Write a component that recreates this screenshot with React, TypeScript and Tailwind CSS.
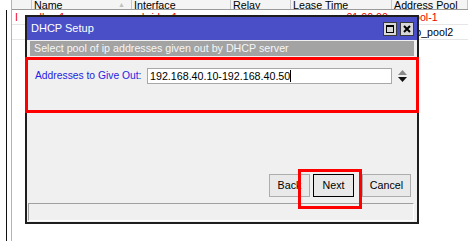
const cols = [
  { w: 20, label: '' },
  { w: 100, label: 'Name' },
  { w: 99, label: 'Interface' },
  { w: 60, label: 'Relay' },
  { w: 101, label: 'Lease Time' },
  { w: 76, label: 'Address Pool' },
];

function TitleButton({ kind }: { kind: 'max' | 'close' }) {
  return (
    <div className="w-[14px] h-[14px] border border-[#3a3a3a] bg-[#d8d8d8] flex items-center justify-center">
      {kind === 'max' ? (
        <div className="w-[8px] h-[8px] border border-black border-t-2" />
      ) : (
        <svg width="8" height="8" viewBox="0 0 8 8">
          <path d="M1 1 L7 7 M7 1 L1 7" stroke="#000" strokeWidth="2" />
        </svg>
      )}
    </div>
  );
}

export default function App() {
  return (
    <div className="relative w-[468px] h-[241px] overflow-hidden bg-white text-[10.7px] text-black font-['Liberation_Sans',Arial,sans-serif]">
      {/* background list window */}
      <div className="flex h-full">
        <div className="w-[6px]" />
        <div className="w-[2px] mt-[10px] bg-[#111]" />
        <div className="w-[4px]" />
        <div className="flex-1 flex flex-col border-l border-[#b4b4b4]">
          <div className="flex h-[10px] border-b border-[#9a9a9a] bg-[#f4f4f4] leading-[10px]">
            {cols.map((c, i) => (
              <div
                key={i}
                style={{ width: c.w }}
                className="relative shrink-0 border-r border-[#c8c8c8] pl-[2px] whitespace-nowrap overflow-hidden"
              >
                {c.label}
                {i === 1 && <span className="absolute right-[6px] top-[0px] text-[7px] text-[#c0c0c0]">▲</span>}
              </div>
            ))}
          </div>
          <div className="flex h-[15px] leading-[15px] border-b border-[#e6e6e6] text-[#f00000] whitespace-nowrap">
            <div className="w-[20px] shrink-0 pl-[3px]">I</div>
            <div className="w-[100px] shrink-0 pl-[4px]">dhcp1</div>
            <div className="w-[99px] shrink-0 pl-[10px]">bridge1</div>
            <div className="w-[60px] shrink-0" />
            <div className="w-[101px] shrink-0 pr-[4px] text-right">01:00:00</div>
            <div className="w-[76px] shrink-0 pl-[16px]">pool-1</div>
          </div>
          <div className="flex h-[15px] leading-[15px] border-b border-[#e6e6e6] whitespace-nowrap">
            <div className="w-[20px] shrink-0" />
            <div className="w-[100px] shrink-0 pl-[4px]">dhcp2</div>
            <div className="w-[99px] shrink-0" />
            <div className="w-[60px] shrink-0" />
            <div className="w-[101px] shrink-0" />
            <div className="w-[76px] shrink-0 pl-[6px]">dhcp_pool2</div>
          </div>
        </div>
      </div>

      {/* DHCP Setup dialog */}
      <div className="absolute left-[25px] top-[15px] w-[394px] flex flex-col border-2 border-[#1e1e1e] bg-[#f0f0f0]">
        <div className="h-[23px] bg-[#4a4fc8] flex items-center justify-between pl-[4px] pr-[3px]">
          <span className="text-white text-[11px]">DHCP Setup</span>
          <div className="flex gap-[3px]">
            <TitleButton kind="max" />
            <TitleButton kind="close" />
          </div>
        </div>
        <div className="mt-[1px] mx-[3px] h-[15px] bg-[#a3a3a3] text-[#f6f6f6] leading-[15px] pl-[4px] whitespace-nowrap">
          Select pool of ip addresses given out by DHCP server
        </div>
        <div className="mt-[1px] -mx-[2px] h-[56px] border-[3px] border-[#ff0000] pl-[7px] pt-[8px]">
          <div className="flex items-center">
            <span className="w-[109px] shrink-0 text-[10.3px] text-[#2424e0] whitespace-nowrap">Addresses to Give Out:</span>
            <div className="ml-[3px] w-[245px] h-[16px] bg-white border border-[#a8a8a8] flex items-center pl-[2px] whitespace-nowrap">
              192.168.40.10-192.168.40.50
              <span className="w-[1px] h-[12px] bg-black" />
            </div>
            <svg className="ml-[6px]" width="9" height="12" viewBox="0 0 9 12">
              <path d="M4.5 0 L9 5 L0 5 Z" fill="#8a8a8a" />
              <path d="M0 7 L9 7 L4.5 12 Z" fill="#111" />
            </svg>
          </div>
        </div>
        <div className="mt-[61px] flex justify-end pr-[6px]">
          <button className="w-[41px] h-[23px] border border-[#adadad] bg-[#e9e9e9]">Back</button>
          <button className="ml-[3px] w-[41px] h-[23px] border border-black bg-[#e9e9e9]">Next</button>
          <button className="ml-[8px] w-[49px] h-[23px] border border-[#adadad] bg-[#e9e9e9]">Cancel</button>
        </div>
        <div className="mt-[6px] ml-[1px] mr-[3px] mb-[1px] h-[18px] border-t border-l border-[#a0a0a0] border-b border-r border-b-white border-r-white" />
        <div className="absolute left-[271px] top-[152px] w-[64px] h-[40px] border-[3px] border-[#ff0000]" />
      </div>
    </div>
  );
}
